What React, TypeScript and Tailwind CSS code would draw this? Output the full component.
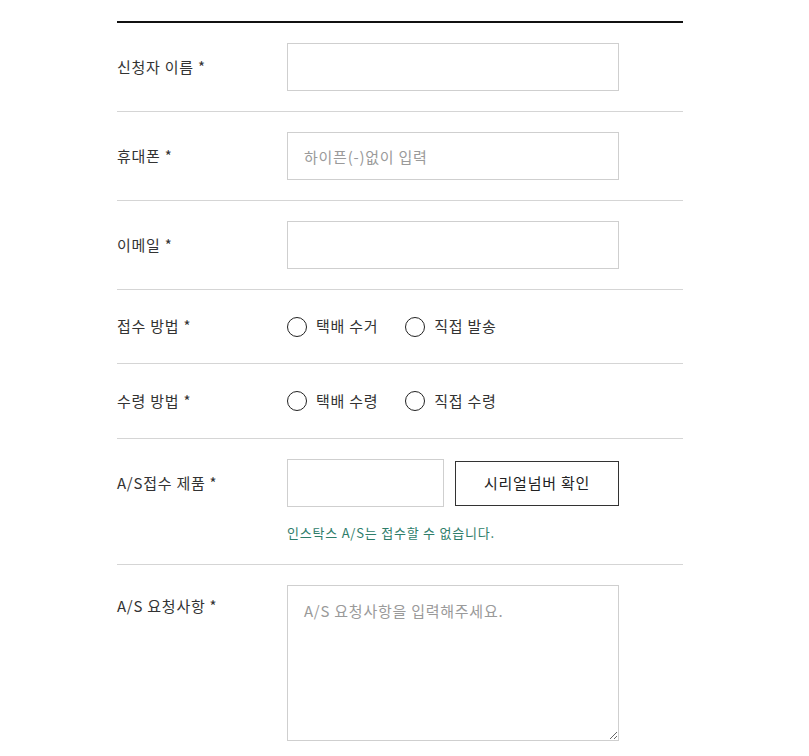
import React from "react";

const font = { fontFamily: '"Noto Sans CJK KR", "Noto Sans", sans-serif' };

function Label({ text }: { text: string }) {
    return <div className="w-[170px] shrink-0 text-[15px] tracking-[0.05em] text-[#333]">{text}</div>;
}

function InputRow({ label, placeholder }: { label: string; placeholder?: string }) {
    return (
        <div className="flex items-center border-b border-[#d5d5d5] py-5">
            <Label text={label} />
            <input
                placeholder={placeholder}
                className="h-12 w-[332px] border border-[#cfcfcf] px-4 text-[15px] tracking-[0.05em] text-[#333] outline-none placeholder:text-[#9a9a9a]"
            />
        </div>
    );
}

function Radio({ label }: { label: string }) {
    return (
        <label className="flex items-center gap-[9px]">
            <span className="h-5 w-5 rounded-full border-[1.5px] border-[#222] bg-white" />
            <span className="text-[15px] tracking-[0.05em] text-[#333]">{label}</span>
        </label>
    );
}

function RadioRow({ label, options, tall }: { label: string; options: string[]; tall?: boolean }) {
    return (
        <div className={`flex items-center border-b border-[#d5d5d5] ${tall ? "h-[75px]" : "h-[74px]"}`}>
            <Label text={label} />
            <div className="flex gap-[27px]">
                {options.map((o) => <Radio key={o} label={o} />)}
            </div>
        </div>
    );
}

export default function App() {
    return (
        <div className="min-h-[756px] bg-white pt-[21px]" style={font}>
            <div className="ml-[117px] w-[566px] border-t-2 border-[#111]">
                <InputRow label="신청자 이름 *" />
                <InputRow label="휴대폰 *" placeholder="하이픈(-)없이 입력" />
                <InputRow label="이메일 *" />
                <RadioRow label="접수 방법 *" options={["택배 수거", "직접 발송"]} />
                <RadioRow label="수령 방법 *" options={["택배 수령", "직접 수령"]} tall />

                <div className="flex border-b border-[#d5d5d5] pt-5 pb-[21px]">
                    <div className="flex h-12 items-center">
                        <Label text="A/S접수 제품 *" />
                    </div>
                    <div className="flex flex-col">
                        <div className="flex items-center gap-[11px]">
                            <input className="h-12 w-[157px] border border-[#cfcfcf] px-4 text-[15px] outline-none" />
                            <button className="h-[45px] w-[164px] border border-[#333] bg-white text-[15px] tracking-[0.05em] text-[#222]">
                                시리얼넘버 확인
                            </button>
                        </div>
                        <p className="mt-[16px] text-[13px] leading-5 tracking-[0.06em] text-[#2e7d6a]">인스탁스 A/S는 접수할 수 없습니다.</p>
                    </div>
                </div>

                <div className="flex pt-5">
                    <div className="pt-[10px]">
                        <Label text="A/S 요청사항 *" />
                    </div>
                    <textarea
                        placeholder="A/S 요청사항을 입력해주세요."
                        className="h-[156px] w-[332px] border border-[#cfcfcf] px-4 py-[13px] text-[15px] leading-6 tracking-[0.05em] text-[#333] outline-none placeholder:text-[#9a9a9a]"
                    />
                </div>
            </div>
        </div>
    );
}
